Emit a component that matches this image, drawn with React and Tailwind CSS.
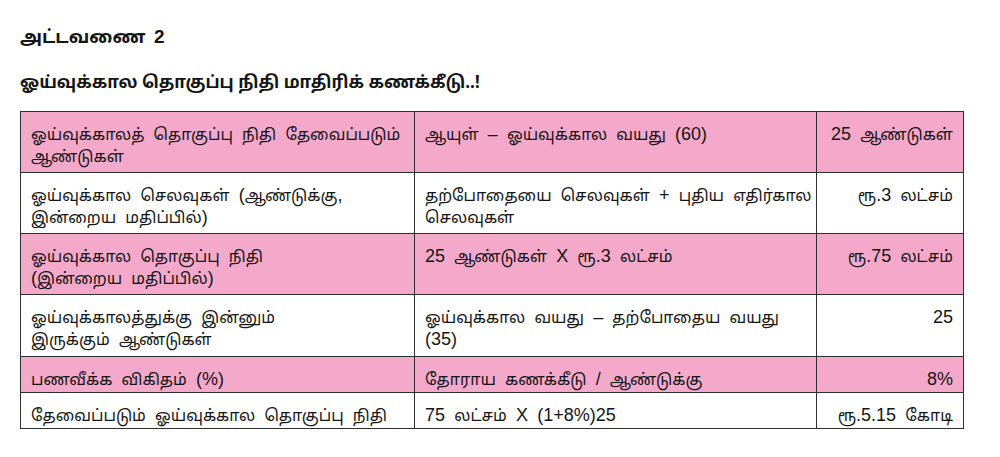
import React from 'react';

// Tamil runs and spaces stay in the Tamil face; digits, signs and brackets go to an Arial-width face
const Txt = ({ s }) =>
  s.split(/([\u0B80-\u0BFF\s]+)/).map((p, i) =>
    p === '' ? null : /^[\u0B80-\u0BFF\s]+$/.test(p) ? (
      <React.Fragment key={i}>{p}</React.Fragment>
    ) : (
      <span key={i} className="font-['Liberation_Sans',sans-serif] text-[18px] leading-[0]">
        {p}
      </span>
    )
  );

const Lines = ({ lines }) =>
  lines.map((l, i) => (
    <React.Fragment key={i}>
      {i > 0 && <br />}
      <Txt s={l} />
    </React.Fragment>
  ));

const rows = [
  {
    pink: true,
    a: ['ஓய்வுக்காலத் தொகுப்பு நிதி தேவைப்படும்', 'ஆண்டுகள்'],
    b: ['ஆயுள் – ஓய்வுக்கால வயது (60)'],
    c: ['25 ஆண்டுகள்'],
    h: 'h-[61px]',
  },
  {
    pink: false,
    a: ['ஓய்வுக்கால செலவுகள் (ஆண்டுக்கு,', 'இன்றைய மதிப்பில்)'],
    b: ['தற்போதையை செலவுகள் + புதிய எதிர்கால', 'செலவுகள்'],
    c: ['ரூ.3 லட்சம்'],
    h: 'h-[61px]',
  },
  {
    pink: true,
    a: ['ஓய்வுக்கால தொகுப்பு நிதி', '(இன்றைய மதிப்பில்)'],
    b: ['25 ஆண்டுகள் X ரூ.3 லட்சம்'],
    c: ['ரூ.75 லட்சம்'],
    h: 'h-[61px]',
  },
  {
    pink: false,
    a: ['ஓய்வுக்காலத்துக்கு இன்னும்', 'இருக்கும் ஆண்டுகள்'],
    b: ['ஓய்வுக்கால வயது – தற்போதைய வயது', '(35)'],
    c: ['25'],
    h: 'h-[62px]',
  },
  {
    pink: true,
    a: ['பணவீக்க விகிதம் (%)'],
    b: ['தோராய கணக்கீடு / ஆண்டுக்கு'],
    c: ['8%'],
    h: 'h-[36px]',
  },
  {
    pink: false,
    a: ['தேவைப்படும் ஓய்வுக்கால தொகுப்பு நிதி'],
    b: ['75 லட்சம் X (1+8%)25'],
    c: ['ரூ.5.15 கோடி'],
    h: 'h-[36px]',
  },
];

const font = "font-['Noto_Sans_Tamil','Lohit_Tamil','Noto_Sans','DejaVu_Sans',sans-serif]";
const cell = 'border border-[#2e2e2e] align-top px-[10px] pt-[13px] pb-0 whitespace-nowrap';

export default function App() {
  return (
    <div className={`w-[1000px] h-[457px] bg-white text-[#151515] ${font} pl-[20px] pt-[26px]`}>
      <h1 className="text-[18px] font-bold leading-[26px] [word-spacing:4px]">
        அட்டவணை <span className="font-['Liberation_Sans',sans-serif] text-[19px] leading-[0]">2</span>
      </h1>
      <h2 className="mt-[19px] text-[17px] font-bold leading-[26px]">
        ஓய்வுக்கால தொகுப்பு நிதி மாதிரிக் கணக்கீடு..!
      </h2>
      <table className="mt-[14px] w-[943px] table-fixed border-collapse text-[16px] leading-[22px] [word-spacing:5px]">
        <colgroup>
          <col className="w-[394px]" />
          <col className="w-[402px]" />
          <col className="w-[147px]" />
        </colgroup>
        <tbody>
          {rows.map((r, i) => (
            <tr key={i} className={`${r.h} ${r.pink ? 'bg-[#f4a9cb]' : 'bg-white'}`}>
              <td className={cell}>
                <Lines lines={r.a} />
              </td>
              <td className={cell}>
                <Lines lines={r.b} />
              </td>
              <td className={`${cell} text-right`}>
                <Lines lines={r.c} />
              </td>
            </tr>
          ))}
        </tbody>
      </table>
    </div>
  );
}
